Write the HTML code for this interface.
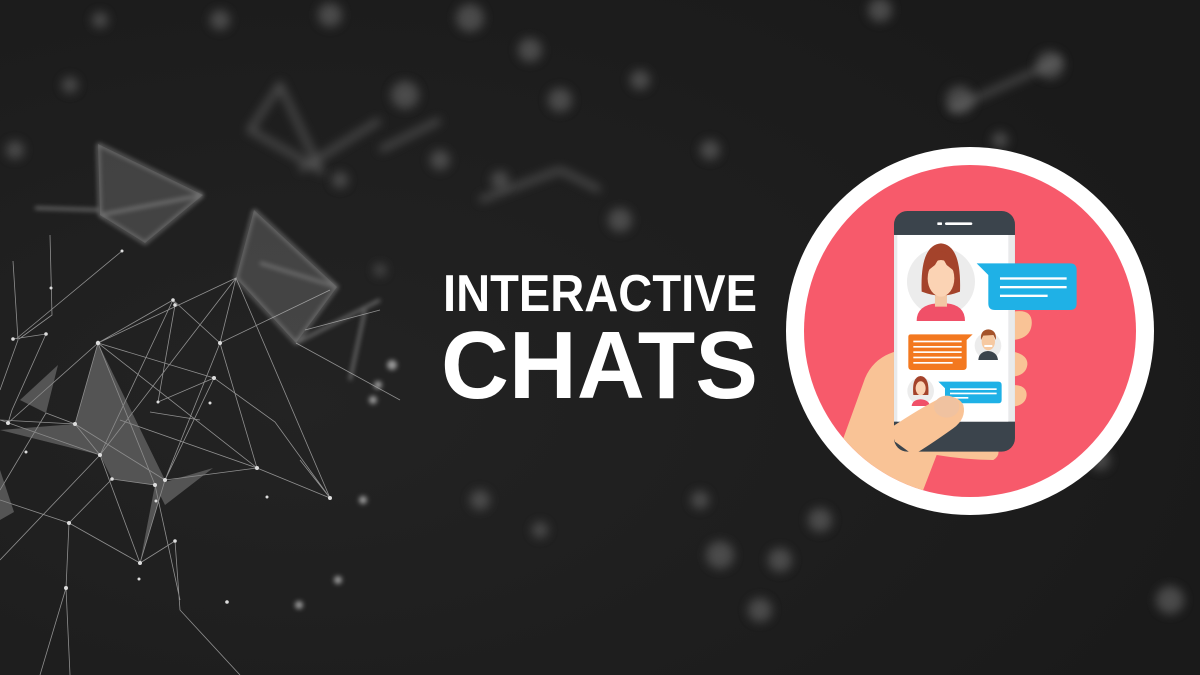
<!DOCTYPE html>
<html><head><meta charset="utf-8"><style>
html,body{margin:0;padding:0;background:#1d1d1d;width:1200px;height:675px;overflow:hidden}
svg{display:block}
</style></head><body>
<svg width="1200" height="675" viewBox="0 0 1200 675" xmlns="http://www.w3.org/2000/svg">
<defs>
<filter id="b6" x="-50%" y="-50%" width="200%" height="200%"><feGaussianBlur stdDeviation="5"/></filter>
<filter id="b3" x="-50%" y="-50%" width="200%" height="200%"><feGaussianBlur stdDeviation="2.5"/></filter>
<radialGradient id="bg" cx="0.25" cy="0.6" r="0.8"><stop offset="0" stop-color="#232323"/><stop offset="1" stop-color="#1a1a1a"/></radialGradient>
</defs>
<rect width="1200" height="675" fill="url(#bg)"/>
<g fill="#5a5a5a" filter="url(#b6)" opacity="0.75">
<circle cx="470" cy="18" r="14"/><circle cx="330" cy="15" r="12"/><circle cx="405" cy="95" r="14"/><circle cx="530" cy="50" r="12"/><circle cx="560" cy="100" r="12"/><circle cx="640" cy="80" r="10"/>
<circle cx="440" cy="160" r="10"/><circle cx="500" cy="180" r="9"/><circle cx="620" cy="220" r="12"/><circle cx="710" cy="150" r="10"/><circle cx="960" cy="100" r="14"/><circle cx="1050" cy="65" r="14"/><circle cx="880" cy="10" r="12"/>
<circle cx="480" cy="500" r="10"/><circle cx="720" cy="555" r="14"/><circle cx="780" cy="560" r="12"/><circle cx="820" cy="520" r="12"/><circle cx="760" cy="610" r="12"/><circle cx="700" cy="500" r="9"/><circle cx="540" cy="530" r="8"/><circle cx="1100" cy="460" r="10"/><circle cx="1170" cy="600" r="14"/><circle cx="220" cy="20" r="10"/><circle cx="15" cy="150" r="9"/><circle cx="70" cy="85" r="8"/>
<circle cx="100" cy="20" r="8"/><circle cx="340" cy="180" r="8"/><circle cx="380" cy="270" r="6"/><circle cx="1000" cy="140" r="8"/>
</g>
<g stroke="#777" stroke-width="5" filter="url(#b6)" opacity="0.65" fill="none">
<path d="M250 130 L280 85 L320 170 Z M300 170 L380 120 M380 150 L440 120 M480 200 L560 170 M560 170 L600 190"/>
<path d="M950 110 L1060 60"/>
</g>
<g stroke="#888" stroke-width="3" filter="url(#b3)" opacity="0.75" fill="none">
<path d="M98 144 L203 195 M98 144 L100 215 L145 243 L203 195 L100 215 M35 208 L100 210"/>
<path d="M254 210 L236 278 L296 343 L337 287 L254 210 M260 263 L337 287 L296 343 M296 343 L380 300 M350 380 L365 310"/>
</g>
<g fill="#888" opacity="0.35"><path d="M98 144 L203 195 L145 243 L100 215Z M254 210 L236 278 L296 343 L337 287Z"/></g>
<g stroke="#ccc" stroke-width="0.8" opacity="0.65" fill="none">
<path d="M0 420 L75 424 L98 343 L236 278 L220 343 L173 300 L100 455 L0 420
M8 423 L98 343 L257 468 L330 498 L236 278 M98 343 L173 300 M98 343 L155 485 L112 479 M75 424 L165 480 L214 378 L98 343
M75 424 L100 455 L140 563 L165 480 L220 343 M112 479 L69 523 L66 588 L40 675 M69 523 L140 563 M165 480 L257 468 L220 343
M122 251 L16 339 M46 334 L13 339 M50 235 L52 315 L19 339 M173 300 L175 305 L158 402 L214 378 M13 261 L18 340 L0 390
M46 334 L12 410 L8 423 M214 378 L275 422 L330 498 M257 468 L330 498 M140 563 L175 541 M175 541 L180 610 L240 675
M66 588 L70 675 M330 498 L300 460 M0 490 L46 413 L75 424 M150 412 L200 420 M100 455 L0 560 M0 500 L69 523
M155 485 L180 600 M257 468 L120 420 M236 278 L100 455 M305 330 L380 310 M220 343 L330 290 M296 343 L400 400"/>
</g>
<g fill="#888" opacity="0.5">
<path d="M75 424 L100 455 L112 479 L155 485 L140 563 L165 480 L98 343Z"/>
<path d="M0 430 L75 424 L100 455 Z M155 485 L213 468 L165 505 Z M0 470 L14 512 L0 520Z M46 413 L58 365 L20 400Z"/>
</g>
<g fill="#ddd">
<circle cx="98" cy="343" r="2.2"/><circle cx="75" cy="424" r="2"/><circle cx="8" cy="423" r="2"/><circle cx="100" cy="455" r="2"/><circle cx="140" cy="563" r="2"/><circle cx="165" cy="480" r="2"/><circle cx="155" cy="485" r="2"/><circle cx="69" cy="523" r="2"/><circle cx="112" cy="479" r="1.8"/><circle cx="220" cy="343" r="2"/><circle cx="257" cy="468" r="2"/><circle cx="330" cy="498" r="2"/><circle cx="214" cy="378" r="2"/><circle cx="173" cy="300" r="1.8"/><circle cx="122" cy="251" r="1.5"/><circle cx="46" cy="334" r="1.8"/><circle cx="13" cy="339" r="1.8"/><circle cx="66" cy="588" r="2"/><circle cx="175" cy="541" r="1.8"/><circle cx="210" cy="403" r="1.5"/><circle cx="156" cy="501" r="1.5"/><circle cx="267" cy="497" r="1.5"/><circle cx="51" cy="288" r="1.5"/><circle cx="26" cy="452" r="1.5"/><circle cx="158" cy="402" r="1.5"/><circle cx="175" cy="305" r="1.8"/><circle cx="227" cy="602" r="1.8"/><circle cx="139" cy="579" r="1.5"/>
</g>
<g fill="#999" filter="url(#b3)"><circle cx="363" cy="500" r="4"/><circle cx="373" cy="400" r="4"/><circle cx="378" cy="385" r="4"/><circle cx="338" cy="580" r="4"/><circle cx="299" cy="605" r="4"/><circle cx="392" cy="365" r="5"/></g>
<g font-family="Liberation Sans, Arial, sans-serif" font-weight="bold" fill="#fff">
<text x="443" y="311" font-size="52" textLength="314" lengthAdjust="spacingAndGlyphs">INTERACTIVE</text>
<text x="441" y="398" font-size="96" textLength="317" lengthAdjust="spacingAndGlyphs">CHATS</text>
</g>
<circle cx="970" cy="331" r="184" fill="#fff"/>
<circle cx="970" cy="331" r="166" fill="#f75a6b"/>
<clipPath id="cc"><circle cx="970" cy="331" r="166"/></clipPath>
<g clip-path="url(#cc)">
<g transform="translate(780,145) scale(0.3333)">
<path d="M700 500 Q760 490 755 540 Q750 580 700 585Z" fill="#f9c396"/>
<path d="M700 620 Q745 630 742 660 Q738 690 700 695Z" fill="#f9c396"/>
<path d="M700 720 Q740 720 740 750 Q738 780 700 785Z" fill="#f9c396"/>
<path d="M345 620 Q280 640 255 700 L190 880 L150 1000 L420 1060 L470 930 Q560 945 640 945 Q665 930 650 905 L350 830Z" fill="#f9c396"/>
<rect x="342" y="198" width="363" height="722" rx="40" fill="#3b444c"/>
<rect x="342" y="270" width="363" height="560" fill="#e9eaeb"/>
<rect x="352" y="270" width="333" height="560" fill="#fff"/>
<rect x="472" y="232" width="14" height="8" rx="2" fill="#fff"/>
<rect x="495" y="232" width="82" height="8" rx="4" fill="#fff"/>
<circle cx="483" cy="410" r="102" fill="#ececec"/>
<path d="M410 528 Q410 480 470 475 L500 475 Q555 480 555 528Z" fill="#f05068"/>
<rect x="465" y="440" width="36" height="45" fill="#f3c7a4"/>
<path d="M425 440 Q420 300 483 295 Q545 300 540 440 Q500 455 483 450 Q466 455 425 440Z" fill="#a4432b"/>
<ellipse cx="483" cy="400" rx="40" ry="55" fill="#fbd3b4"/>
<path d="M440 380 Q450 320 483 320 Q515 320 525 380 L500 360 L483 330 L465 360Z" fill="#a4432b"/>
<path d="M590 355 L870 355 Q890 355 890 375 L890 475 Q890 495 870 495 L645 495 Q625 495 625 475 L625 390Z" fill="#1fb1e6"/>
<g fill="#fff"><rect x="660" y="397" width="200" height="7"/><rect x="660" y="423" width="200" height="7"/><rect x="660" y="449" width="143" height="7"/></g>
<path d="M392 568 L578 568 L560 585 L560 665 Q560 675 550 675 L395 675 Q385 675 385 665 L385 575 Q385 568 392 568Z" fill="#f3781f"/>
<g fill="#fff"><rect x="400" y="587" width="145" height="5"/><rect x="400" y="603" width="145" height="5"/><rect x="400" y="619" width="145" height="5"/><rect x="400" y="635" width="145" height="5"/><rect x="400" y="651" width="118" height="5"/></g>
<circle cx="624" cy="602" r="40" fill="#ececec"/>
<path d="M595 645 Q597 620 624 618 Q651 620 654 645Z" fill="#3b444c"/>
<ellipse cx="625" cy="590" rx="20" ry="26" fill="#f6c9a2"/>
<path d="M603 585 Q600 555 625 553 Q650 555 648 585 L640 570 L610 572Z" fill="#a4532b"/>
<rect x="613" y="600" width="24" height="6" fill="#fff"/>
<circle cx="422" cy="738" r="40" fill="#ececec"/>
<path d="M395 783 Q397 765 422 763 Q447 765 450 783Z" fill="#f05068"/>
<path d="M400 750 Q395 695 422 693 Q449 695 445 750Z" fill="#a4432b"/>
<ellipse cx="422" cy="730" rx="15" ry="21" fill="#fbd3b4"/>
<path d="M475 710 L655 710 Q665 710 665 720 L665 765 Q665 775 655 775 L505 775 Q495 775 495 765 L495 730Z" fill="#1fb1e6"/>
<g fill="#fff"><rect x="510" y="730" width="140" height="5"/><rect x="510" y="743" width="140" height="5"/><rect x="510" y="756" width="55" height="5"/></g>
<path d="M330 850 Q420 790 480 760 Q530 745 550 780 Q560 820 520 850 Q450 900 400 930 L345 890Z" fill="#f9c396"/>
<ellipse cx="500" cy="785" rx="38" ry="33" fill="#f0c2a0"/>
</g>
</g>
</svg>
</body></html>
